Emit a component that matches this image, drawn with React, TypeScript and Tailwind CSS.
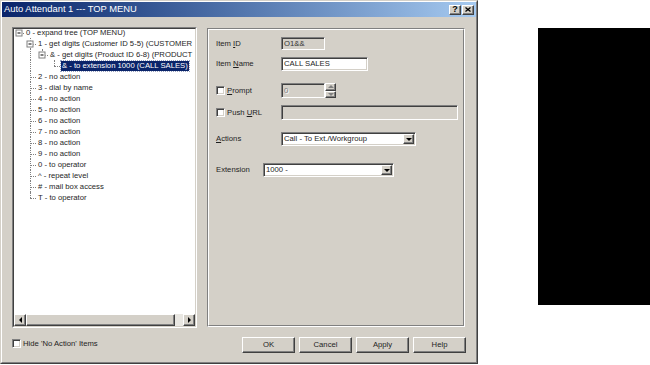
import React from "react";

type Row = {
  level: number;
  text: string;
  expander?: boolean;
  last?: boolean;
  cont: boolean[];
  selected?: boolean;
};

const rows: Row[] = [
  { level: 0, text: "0 - expand tree (TOP MENU)", expander: true, last: true, cont: [] },
  { level: 1, text: "1 - get digits (Customer ID 5-5) (CUSTOMER", expander: true, cont: [] },
  { level: 2, text: "& - get digits (Product ID 6-8) (PRODUCT", expander: true, last: true, cont: [true] },
  { level: 3, text: "& - to extension 1000 (CALL SALES)", last: true, cont: [true, false], selected: true },
  { level: 1, text: "2 - no action", cont: [] },
  { level: 1, text: "3 - dial by name", cont: [] },
  { level: 1, text: "4 - no action", cont: [] },
  { level: 1, text: "5 - no action", cont: [] },
  { level: 1, text: "6 - no action", cont: [] },
  { level: 1, text: "7 - no action", cont: [] },
  { level: 1, text: "8 - no action", cont: [] },
  { level: 1, text: "9 - no action", cont: [] },
  { level: 1, text: "0 - to operator", cont: [] },
  { level: 1, text: "^ - repeat level", cont: [] },
  { level: 1, text: "# - mail box access", cont: [] },
  { level: 1, text: "T - to operator", last: true, cont: [] },
];

const raised =
  "border border-t-white border-l-white border-r-[#404040] border-b-[#404040] shadow-[inset_-1px_-1px_0_#808080] bg-[#d4d0c8]";
const sunken =
  "border border-t-[#808080] border-l-[#808080] border-r-white border-b-white shadow-[inset_1px_1px_0_#404040,inset_-1px_-1px_0_#d4d0c8]";

function Arrow({ dir, color = "#000" }: { dir: "left" | "right" | "up" | "down"; color?: string }) {
  const pts = {
    left: "4,0 4,6 1,3",
    right: "1,0 1,6 4,3",
    up: "0,4 6,4 3,1",
    down: "0,1 6,1 3,4",
  }[dir];
  const vert = dir === "up" || dir === "down";
  return (
    <svg width={vert ? 6 : 5} height={vert ? 5 : 6} viewBox={vert ? "0 0 6 5" : "0 0 5 6"}>
      <polygon points={pts} fill={color} />
    </svg>
  );
}

function TreeRow({ row }: { row: Row }) {
  const cells = [];
  for (let c = 0; c <= row.level; c++) {
    const w = c === 0 ? "w-[10px]" : "w-[12px]";
    const own = c === row.level;
    cells.push(
      <div key={c} className={`relative h-[11px] shrink-0 ${w}`}>
        {!own && c > 0 && row.cont[c - 1] && (
          <div className="absolute left-1/2 top-0 bottom-0 border-l border-dotted border-[#808080]" />
        )}
        {own && row.level > 0 && (
          <div
            className={`absolute left-1/2 top-0 border-l border-dotted border-[#808080] ${
              row.last ? "h-1/2" : "bottom-0"
            }`}
          />
        )}
        {own && <div className="absolute left-1/2 right-0 top-1/2 border-t border-dotted border-[#808080]" />}
        {own && row.expander && (
          <div className="absolute left-1/2 top-1/2 -translate-x-1/2 -translate-y-1/2 w-[7px] h-[7px] border border-[#808080] bg-white flex items-center justify-center">
            <div className="w-[3px] h-px bg-black" />
          </div>
        )}
      </div>
    );
  }
  return (
    <div className="flex h-[11px] items-center">
      {cells}
      <span
        className={`ml-[1px] px-[1px] whitespace-nowrap leading-[10px] h-[10px] ${
          row.selected ? "bg-[#0a246a] text-white outline outline-1 outline-dotted outline-[#9aa4c0]" : ""
        }`}
      >
        {row.text}
      </span>
    </div>
  );
}

function Check() {
  return <span className={`inline-block w-[9px] h-[9px] bg-white shrink-0 ${sunken}`} />;
}

function Select({ width, value }: { width: string; value: string }) {
  return (
    <div className={`flex items-center h-[14px] bg-white ${width} ${sunken}`}>
      <span className="flex-1 pl-[2px] whitespace-nowrap">{value}</span>
      <div className={`w-[11px] h-[10px] mr-[1px] flex items-center justify-center ${raised}`}>
        <Arrow dir="down" />
      </div>
    </div>
  );
}

function Btn({ label }: { label: string }) {
  return (
    <div className={`w-[53px] h-[16px] flex items-center justify-center ${raised}`}>
      {label}
    </div>
  );
}

export default function App() {
  return (
    <div className="w-[650px] h-[365px] bg-white flex items-start font-['Liberation_Sans',Arial,sans-serif] text-[7.7px] text-[#1e1e1e]">
      {/* dialog */}
      <div className="w-[478px] h-[364px] border border-t-[#d4d0c8] border-l-[#d4d0c8] border-r-[#404040] border-b-[#404040] bg-[#d4d0c8]">
        <div className="h-full border border-t-white border-l-white border-r-[#808080] border-b-[#808080] flex flex-col">
          {/* title bar */}
          <div className="h-[15px] flex items-center bg-gradient-to-r from-[#0a246a] to-[#a6caf0] pl-[2px] pr-[2px]">
            <span className="flex-1 text-white text-[9.4px]">Auto Attendant 1 --- TOP MENU</span>
            <div className={`w-[12px] h-[10px] flex items-center justify-center text-[9px] text-black font-bold leading-none ${raised}`}>
              ?
            </div>
            <div className={`w-[12px] h-[10px] flex items-center justify-center ml-px ${raised}`}>
              <svg width="6" height="5" viewBox="0 0 6 5">
                <path d="M0.5 0.5 L5.5 4.5 M5.5 0.5 L0.5 4.5" stroke="#000" strokeWidth="1.3" />
              </svg>
            </div>
          </div>

          {/* body */}
          <div className="flex flex-col pl-[10px] pt-[10px]">
            <div className="flex gap-[10px]">
              {/* tree */}
              <div className="w-[185px] h-[301px] border border-t-[#808080] border-l-[#808080] border-r-white border-b-white">
                <div className="h-full border border-t-[#404040] border-l-[#404040] border-r-[#d4d0c8] border-b-[#d4d0c8] bg-white flex flex-col">
                  <div className="flex-1 overflow-hidden">
                    <div className="-mt-[2px]">
                      {rows.map((r, i) => (
                        <TreeRow key={i} row={r} />
                      ))}
                    </div>
                  </div>
                  <div className="h-[12px] flex">
                    <div className={`w-[12px] flex items-center justify-center ${raised}`}>
                      <Arrow dir="left" />
                    </div>
                    <div className={`flex-1 ${raised}`} />
                    <div className="w-[8px] bg-[#e9e7e2]" />
                    <div className={`w-[12px] flex items-center justify-center ${raised}`}>
                      <Arrow dir="right" />
                    </div>
                  </div>
                </div>
              </div>

              {/* details group */}
              <div className="mt-[1px] w-[258px] h-[299px] border border-t-[#808080] border-l-[#808080] border-r-white border-b-white">
                <div className="h-full border border-t-white border-l-white border-r-[#808080] border-b-[#808080] flex flex-col pl-[7px]">
                  <div className="flex items-center mt-[7px]">
                    <span className="w-[65px]">
                      Item <span className="underline">I</span>D
                    </span>
                    <div className={`w-[44px] h-[13px] flex items-center pl-[2px] bg-[#d4d0c8] text-[#333] ${sunken}`}>
                      O1&amp;&amp;
                    </div>
                  </div>
                  <div className="flex items-center mt-[7px]">
                    <span className="w-[65px]">
                      Item <span className="underline">N</span>ame
                    </span>
                    <div className={`w-[87px] h-[14px] flex items-center pl-[2px] bg-white ${sunken}`}>CALL SALES</div>
                  </div>
                  <div className="flex items-center mt-[12px]">
                    <span className="w-[65px] flex items-center">
                      <Check />
                      <span className="ml-[2px]">
                        <span className="underline">P</span>rompt
                      </span>
                    </span>
                    <div className={`w-[44px] h-[15px] flex items-center pl-[2px] bg-[#d4d0c8] text-[#808080] [text-shadow:1px_1px_0_#fff] ${sunken}`}>
                      0
                    </div>
                    <div className="w-[11px] h-[15px] flex flex-col">
                      <div className={`flex-1 flex items-center justify-center ${raised}`}>
                        <Arrow dir="up" color="#808080" />
                      </div>
                      <div className={`flex-1 flex items-center justify-center ${raised}`}>
                        <Arrow dir="down" color="#808080" />
                      </div>
                    </div>
                  </div>
                  <div className="flex items-center mt-[7px]">
                    <span className="w-[65px] flex items-center">
                      <Check />
                      <span className="ml-[2px]">
                        Push <span className="underline">U</span>RL
                      </span>
                    </span>
                    <div className={`w-[177px] h-[15px] bg-[#d4d0c8] ${sunken}`} />
                  </div>
                  <div className="flex items-center mt-[12px]">
                    <span className="w-[65px]">
                      <span className="underline">A</span>ctions
                    </span>
                    <Select width="w-[135px]" value="Call - To Ext./Workgroup" />
                  </div>
                  <div className="flex items-center mt-[17px]">
                    <span className="w-[47px]">Extension</span>
                    <Select width="w-[131px]" value="1000 -" />
                  </div>
                </div>
              </div>
            </div>

            {/* bottom row */}
            <div className="flex items-center mt-[9px] pr-[10px]">
              <div className="flex items-center flex-1 -mt-[3px]">
                <Check />
                <span className="ml-[2px]">Hide 'No Action' Items</span>
              </div>
              <div className="flex gap-[4px]">
                <Btn label="OK" />
                <Btn label="Cancel" />
                <Btn label="Apply" />
                <Btn label="Help" />
              </div>
            </div>
          </div>
        </div>
      </div>

      {/* black panel on the right */}
      <div className="ml-[60px] mt-[28px] w-[112px] h-[277px] bg-black" />
    </div>
  );
}
